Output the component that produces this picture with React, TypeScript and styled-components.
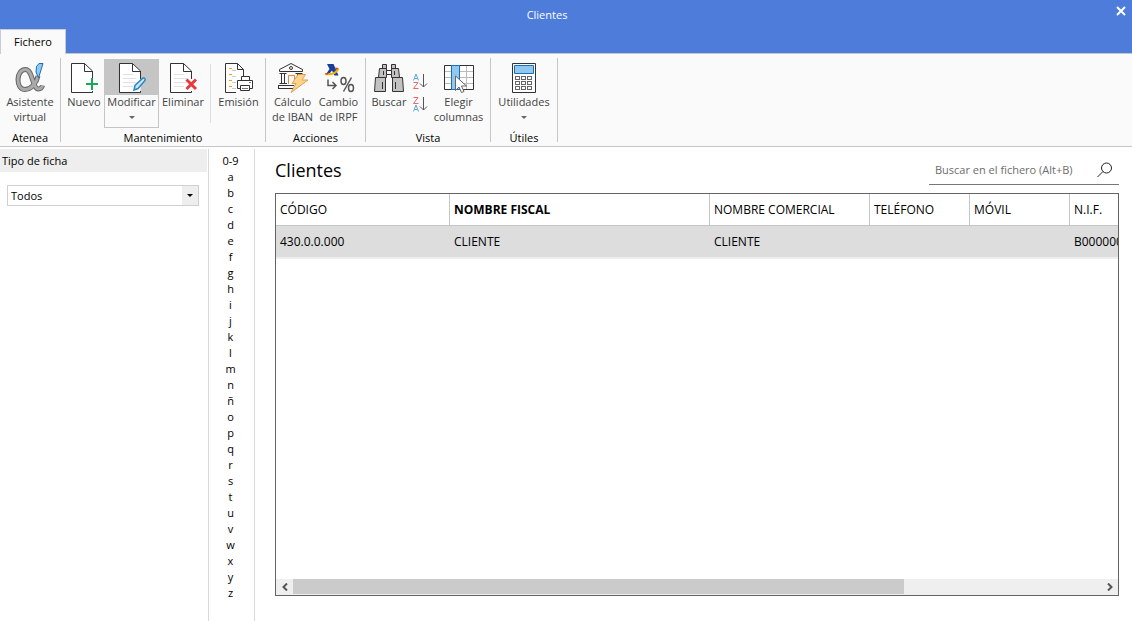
import React from 'react';
import styled, { createGlobalStyle, css } from 'styled-components';

const GlobalStyle = createGlobalStyle`
  * { box-sizing: border-box; }
  body {
    margin: 0;
    background: #fff;
    color: #000;
    font-family: 'Open Sans', 'Noto Sans', sans-serif;
    font-size: 11px;
    line-height: 15px;
  }
  button, input, select { font: inherit; color: inherit; }
  button { background: none; border: 0; padding: 0; margin: 0; }
  svg { display: block; }
`;

const Window = styled.div`
  min-height: 100vh;
  display: flex;
  flex-direction: column;
`;

const Header = styled.header`
  background: #4d7cdb;
`;

const TitleBar = styled.div`
  display: flex;
  align-items: flex-start;
  height: 29px;
`;

const WindowTitle = styled.div`
  flex: 1;
  padding-top: 7px;
  text-align: center;
  color: #fff;
`;

const CloseButton = styled.button`
  width: 38px;
  height: 24px;
  padding: 6px 6px 0 0;
  display: flex;
  justify-content: flex-end;
`;

const Tab = styled.button`
  width: 66px;
  height: 25px;
  margin-bottom: -1px;
  padding-bottom: 2px;
  position: relative;
  display: block;
  background: #fafafa;
  border: 1px solid #c6ccd8;
  border-bottom: 0;
`;

const Ribbon = styled.div`
  display: flex;
  height: 94px;
  padding-top: 4px;
  background: #fafafa;
  border-top: 1px solid #c6c6c6;
  border-bottom: 1px solid #c6c6c6;
`;

const Group = styled.section<{ $width: number }>`
  width: ${(p) => p.$width}px;
  height: 84px;
  display: flex;
  flex-direction: column;
  border-right: 1px solid #c6c6c6;
`;

const GroupTools = styled.div`
  flex: 1;
  display: flex;
  justify-content: center;
  padding-top: 1px;
`;

const GroupLabel = styled.div`
  margin-bottom: -3px;
  text-align: center;
`;

const ToolButton = styled.button<{ $width: number; $active?: boolean }>`
  width: ${(p) => p.$width}px;
  height: 69px;
  display: flex;
  flex-direction: column;
  align-items: center;
  color: #444;
  white-space: nowrap;
  ${(p) => p.$active && css`box-shadow: inset 0 0 0 1px #c5c5c5;`}
`;

const ToolIcon = styled.span<{ $active?: boolean }>`
  width: 100%;
  height: 36px;
  flex: none;
  margin-bottom: -1px;
  padding-top: 3px;
  display: flex;
  justify-content: center;
  background: ${(p) => (p.$active ? '#c5c5c5' : 'transparent')};
`;

const Caret = styled.span`
  margin-top: 7px;
  border: 3px solid transparent;
  border-top-color: #666;
  border-bottom: 0;
`;

const Divider = styled.span`
  width: 1px;
  height: 59px;
  margin: 5px 4px 0 3px;
  background: #dcdcdc;
`;

const SortButtons = styled.div`
  display: flex;
  flex-direction: column;
  gap: 5px;
  margin-left: 1px;
  padding-top: 14px;
`;

const Body = styled.div`
  flex: 1;
  display: flex;
  padding-top: 2px;
`;

const Sidebar = styled.aside`
  width: 209px;
  padding-right: 1px;
  border-right: 1px solid #d9d9d9;
`;

const SidebarTitle = styled.label`
  display: block;
  height: 23px;
  padding: 4px 2px;
  background: #eee;
`;

const SelectBox = styled.div`
  margin: 13px 8px 0 7px;
  position: relative;
`;

const Select = styled.select`
  width: 100%;
  height: 21px;
  padding: 0 3px;
  appearance: none;
  border: 1px solid #d0d0d0;
  border-radius: 0;
  background: #fff;
`;

const SelectArrow = styled.span`
  position: absolute;
  top: 1px;
  right: 1px;
  width: 16px;
  height: 19px;
  display: flex;
  align-items: center;
  justify-content: center;
  background: #eee;
  pointer-events: none;

  &::after {
    content: '';
    border: 3px solid transparent;
    border-top-color: #000;
    border-bottom: 0;
  }
`;

const LetterIndex = styled.nav`
  width: 46px;
  padding: 4px 2px 0 0;
  display: flex;
  flex-direction: column;
  border-right: 1px solid #d9d9d9;
`;

const Letter = styled.a`
  height: 16px;
  line-height: 16px;
  text-align: center;
  color: #000;
  text-decoration: none;
`;

const Main = styled.main`
  flex: 1;
  min-width: 0;
  padding: 6px 13px 25px 20px;
  display: flex;
  flex-direction: column;
`;

const MainHeader = styled.div`
  display: flex;
  justify-content: space-between;
  height: 38px;
`;

const Heading = styled.h1`
  margin: 0;
  font-size: 18px;
  line-height: 30px;
  font-weight: 400;
`;

const Search = styled.div`
  width: 190px;
  height: 30px;
  padding: 0 6px;
  display: flex;
  align-items: center;
  border-bottom: 1px solid #777;
`;

const SearchInput = styled.input`
  flex: 1;
  min-width: 0;
  padding: 0;
  border: 0;
  outline: 0;
  background: none;
  &::placeholder { color: #6d6d6d; opacity: 1; }
`;

const Grid = styled.div`
  flex: 1;
  display: flex;
  flex-direction: column;
  border: 1px solid #646464;
`;

const GridViewport = styled.div`
  flex: 1;
  overflow: hidden;
`;

const Table = styled.table`
  width: 1120px;
  table-layout: fixed;
  border-collapse: separate;
  border-spacing: 0;
  font-size: 12px;
  line-height: 16px;
`;

const Th = styled.th<{ $width?: number; $sorted?: boolean }>`
  width: ${(p) => (p.$width ? `${p.$width}px` : 'auto')};
  height: 32px;
  padding: 0 4px;
  text-align: left;
  white-space: nowrap;
  font-weight: ${(p) => (p.$sorted ? 700 : 400)};
  border-right: 1px solid #c6c6c6;
  border-bottom: 1px solid #c6c6c6;
`;

const Td = styled.td`
  height: 33px;
  padding: 0 4px;
  background: #ddd;
  border-bottom: 2px solid #eee;
`;

const ScrollBar = styled.div`
  height: 16px;
  display: flex;
  background: #efefef;
`;

const ScrollButton = styled.button`
  width: 17px;
  height: 16px;
  display: flex;
  align-items: center;
  justify-content: center;
`;

const ScrollTrack = styled.div`
  flex: 1;
`;

const ScrollThumb = styled.div`
  width: 75.6%;
  height: 15px;
  background: #cbcbcb;
`;

const Page = ({ lines }: { lines?: boolean }) => (
  <>
    <path d="M1.5 1.5H15L22.5 9V30.5H1.5Z" fill="#fff" />
    {lines && <path d="M5 12.5H15M5 16.5H18M5 20.5H18M5 24.5H15" stroke="#e0e0e0" fill="none" />}
    <path d="M22.5 17V9L14.5 1.5H1.5V30.5H22.5V29M14.5 1.5V9.5H22.5" fill="none" stroke="#333" />
  </>
);

const alphaStroke =
  'M23 14C21.5 21 16 27.5 10 27.5C5.500 27.5 3 23 3 17.5C3 12 6 7.500 10.500 7.500C18 7.500 17 27 23.500 27C26 27 27 25.500 27.500 23.500';

const AlphaIcon = () => (
  <svg width="30" height="32" viewBox="0 0 30 32">
    <path d={alphaStroke} fill="none" stroke="#666" strokeWidth="5" />
    <path d={alphaStroke} fill="none" stroke="#aaa" strokeWidth="3" />
    <path d="M21.5 4.500L24 1.500H28L23.500 16L21 10Z" fill="#90c8f0" stroke="#1a6fb5" />
  </svg>
);

const NewIcon = () => (
  <svg width="28" height="32" viewBox="0 0 28 32">
    <Page />
    <path d="M16 22H28M22 16V28" stroke="#18a957" strokeWidth="2" />
  </svg>
);

const EditIcon = () => (
  <svg width="28" height="32" viewBox="0 0 28 32">
    <Page lines />
    <path d="M16 28L17 23.5L25 16Q27.5 15.5 27 18.5L20 26.5Z" fill="#cfe6f7" stroke="#2a86c8" strokeWidth="1.5" />
  </svg>
);

const DeleteIcon = () => (
  <svg width="28" height="32" viewBox="0 0 28 32">
    <Page lines />
    <path d="M17.5 17.5L27 27M27 17.5L17.5 27" stroke="#e8393c" strokeWidth="3" />
  </svg>
);

const PrintIcon = () => (
  <svg width="29" height="32" viewBox="0 0 29 32">
    <path d="M12 30.5H1.5V1.5H13.5L19.5 7.5V14M13.5 1.5V7.5H19.5" fill="#fff" stroke="#333" />
    <path d="M5 6.5H8M5 12.5H8M5 18.5H8M5 24.5H8" stroke="#f0a020" />
    <path d="M8 8.5H12M8 14.5H12M8 20.5H12M8 26.5H12" stroke="#ccc" />
    <path d="M17.5 18V14.5H25.5V18M13.5 18.5H28.5V26.5H13.5Z" fill="#fff" stroke="#333" />
    <path d="M16.5 23.5H25.5V28.5H16.5Z" fill="#fff" stroke="#333" />
    <path d="M18 26.5H24M25 20.5H27" stroke="#777" />
  </svg>
);

const BankIcon = () => (
  <svg width="32" height="32" viewBox="0 0 32 32">
    <path d="M2.5 9.5V7.5L14 1.5L25.5 7.5V9.5ZM2.5 11.5H9.5M18.5 11.5H25.5M4.5 12V21M7.5 12V21M20.5 12V15M23.5 12V14M2.5 21.5H10M1.5 23.5H17M1.5 26.5H16M1.5 23V27" fill="none" stroke="#333" />
    <circle cx="14" cy="6" r="1.5" fill="none" stroke="#333" />
    <path d="M11.5 22V13.5H17.5V18" fill="none" stroke="#e08a3c" />
    <path d="M21 12.500H28.500L25 18H31L14 30.500L19 21.500H15Z" fill="#fbd58b" stroke="#e3a04c" />
  </svg>
);

const TaxIcon = () => (
  <svg width="32" height="32" viewBox="0 0 32 32">
    <path d="M4 2H10.5L15.500 13.500H11.500L9 8.500L5.500 13H2.500L6.500 7Z" fill="#173f9c" />
    <path d="M2 12Q12 13.500 15.500 6.500" fill="none" stroke="#f4b400" strokeWidth="2" />
    <path d="M2 11.500L6 10.500L4 13ZM12 5.500L15.500 6L13.500 8Z" fill="#d9342b" />
    <path d="M5 17.500V23.500H12.500M9.500 20L13 23.500L9.500 27" fill="none" stroke="#555" strokeWidth="1.5" />
    <path d="M28.500 15.500L20.500 29.500" stroke="#555" strokeWidth="1.5" />
    <ellipse cx="20.5" cy="19" rx="2.5" ry="3.5" fill="none" stroke="#555" strokeWidth="1.5" />
    <ellipse cx="28" cy="26" rx="2.5" ry="3.5" fill="none" stroke="#555" strokeWidth="1.5" />
  </svg>
);

const BinocularsIcon = () => (
  <svg width="32" height="32" viewBox="0 0 32 32" fill="#c4c2c0" stroke="#333">
    <path d="M9.5 2.5H13.5V6.5H9.5ZM18.5 2.5H22.5V6.5H18.5ZM6.5 6.5H13.5V15.5H5.5ZM18.5 6.5H25.5L26.5 15.5H18.5ZM2.5 15.5H12.5V29.5H1.5ZM19.5 15.5H29.5L30.5 29.5H19.5Z" />
    <path d="M13.5 8.5H18.5V12.5H13.5Z" fill="#fff" />
    <path d="M9.500 20V27M22.500 20V27M10.500 9V13M21.500 9V13" />
  </svg>
);

const SortIcon = ({ descending }: { descending?: boolean }) => (
  <svg width="16" height="18" viewBox="0 0 16 18" fill="none">
    <path d="M1.5 7.5L4 1L6.5 7.5M2.5 5.5H5.5" stroke="#5ba7dc" transform={descending ? 'translate(0 8)' : undefined} />
    <path d="M1.5 9.5H6L1.5 15.5H6.5" stroke="#e8696c" transform={descending ? 'translate(0 -8)' : undefined} />
    <path d="M11.5 1V14M8 10.5L11.5 14L15 10.5" stroke="#555" />
  </svg>
);

const ColumnsIcon = () => (
  <svg width="32" height="32" viewBox="0 0 32 32">
    <path d="M1.5 3.5H30.500V27.500H1.5Z" fill="#fff" stroke="#333" />
    <path d="M2 9.500H30M2 15.500H30M2 21.500H30M23.500 4V27" stroke="#bbb" />
    <path d="M8.500 3.500H16.500V27.500H8.500Z" fill="#90c8f0" stroke="#1a6fb5" />
    <path d="M12.500 14V28.500L16 25L18.500 30.500L21 29.500L18.500 24H23.500Z" fill="#fff" stroke="#666" />
  </svg>
);

const CalculatorIcon = () => (
  <svg width="24" height="32" viewBox="0 0 24 32">
    <path d="M.5 1.5H23.5V30.5H.5Z" fill="#fff" stroke="#333" />
    <path d="M2.5 3.5H21.5V11.5H2.5Z" fill="#90c8f0" stroke="#1a6fb5" />
    <g fill="none" stroke="#666">
      {[14.5, 19.5, 24.5].map((y) =>
        [3.5, 9.5, 15.5].map((x) => <rect key={`${x}-${y}`} x={x} y={y} width="4" height="3" />),
      )}
    </g>
  </svg>
);

const columns = [
  { name: 'CÓDIGO', width: 174 },
  { name: 'NOMBRE FISCAL', width: 260, sorted: true },
  { name: 'NOMBRE COMERCIAL', width: 160 },
  { name: 'TELÉFONO', width: 100 },
  { name: 'MÓVIL', width: 100 },
  { name: 'N.I.F.' },
];

const clients = [['430.0.0.000', 'CLIENTE', 'CLIENTE', '', '', 'B00000000']];

const letters = ['0-9', ...'abcdefghijklmnñopqrstuvwxyz'];

type ToolProps = {
  width: number;
  icon: React.ReactNode;
  lines: string[];
  active?: boolean;
  menu?: boolean;
};

const Tool = ({ width, icon, lines, active, menu }: ToolProps) => (
  <ToolButton type="button" $width={width} $active={active}>
    <ToolIcon $active={active}>{icon}</ToolIcon>
    {lines.map((line) => (
      <span key={line}>{line}</span>
    ))}
    {menu && <Caret />}
  </ToolButton>
);

export default function App() {
  return (
    <Window>
      <GlobalStyle />
      <Header>
        <TitleBar>
          <WindowTitle>Clientes</WindowTitle>
          <CloseButton type="button" aria-label="Cerrar">
            <svg width="10" height="10" viewBox="0 0 10 10">
              <path d="M1 1L9 9M9 1L1 9" stroke="#fff" strokeWidth="2" />
            </svg>
          </CloseButton>
        </TitleBar>
        <Tab type="button">Fichero</Tab>
      </Header>

      <Ribbon>
        <Group $width={61}>
          <GroupTools>
            <Tool width={58} icon={<AlphaIcon />} lines={['Asistente', 'virtual']} />
          </GroupTools>
          <GroupLabel>Atenea</GroupLabel>
        </Group>
        <Group $width={205}>
          <GroupTools>
            <Tool width={40} icon={<NewIcon />} lines={['Nuevo']} />
            <Tool width={55} icon={<EditIcon />} lines={['Modificar']} active menu />
            <Tool width={48} icon={<DeleteIcon />} lines={['Eliminar']} />
            <Divider />
            <Tool width={47} icon={<PrintIcon />} lines={['Emisión']} />
          </GroupTools>
          <GroupLabel>Mantenimiento</GroupLabel>
        </Group>
        <Group $width={100}>
          <GroupTools>
            <Tool width={46} icon={<BankIcon />} lines={['Cálculo', 'de IBAN']} />
            <Tool width={46} icon={<TaxIcon />} lines={['Cambio', 'de IRPF']} />
          </GroupTools>
          <GroupLabel>Acciones</GroupLabel>
        </Group>
        <Group $width={125}>
          <GroupTools>
            <Tool width={44} icon={<BinocularsIcon />} lines={['Buscar']} />
            <SortButtons>
              <button type="button" aria-label="Orden ascendente"><SortIcon /></button>
              <button type="button" aria-label="Orden descendente"><SortIcon descending /></button>
            </SortButtons>
            <Tool width={61} icon={<ColumnsIcon />} lines={['Elegir', 'columnas']} />
          </GroupTools>
          <GroupLabel>Vista</GroupLabel>
        </Group>
        <Group $width={67}>
          <GroupTools>
            <Tool width={58} icon={<CalculatorIcon />} lines={['Utilidades']} menu />
          </GroupTools>
          <GroupLabel>Útiles</GroupLabel>
        </Group>
      </Ribbon>

      <Body>
        <Sidebar>
          <SidebarTitle htmlFor="tipo">Tipo de ficha</SidebarTitle>
          <SelectBox>
            <Select id="tipo" defaultValue="Todos">
              <option>Todos</option>
            </Select>
            <SelectArrow />
          </SelectBox>
        </Sidebar>

        <LetterIndex>
          {letters.map((letter) => (
            <Letter key={letter} href={`#${letter}`}>{letter}</Letter>
          ))}
        </LetterIndex>

        <Main>
          <MainHeader>
            <Heading>Clientes</Heading>
            <Search>
              <SearchInput placeholder="Buscar en el fichero (Alt+B)" aria-label="Buscar en el fichero" />
              <svg width="16" height="16" viewBox="0 0 16 16" fill="none" stroke="#222">
                <circle cx="9.5" cy="6" r="5" />
                <path d="M6 9.5L.5 15" />
              </svg>
            </Search>
          </MainHeader>
          <Grid>
            <GridViewport>
              <Table>
                <thead>
                  <tr>
                    {columns.map((c) => (
                      <Th key={c.name} $width={c.width} $sorted={c.sorted}>{c.name}</Th>
                    ))}
                  </tr>
                </thead>
                <tbody>
                  {clients.map((row) => (
                    <tr key={row[0]}>
                      {row.map((value, i) => (
                        <Td key={columns[i].name}>{value}</Td>
                      ))}
                    </tr>
                  ))}
                </tbody>
              </Table>
            </GridViewport>
            <ScrollBar>
              <ScrollButton type="button" aria-label="Desplazar a la izquierda">
                <svg width="6" height="8" viewBox="0 0 6 8"><path d="M5 .5L1.5 4L5 7.5" fill="none" stroke="#555" strokeWidth="2" /></svg>
              </ScrollButton>
              <ScrollTrack><ScrollThumb /></ScrollTrack>
              <ScrollButton type="button" aria-label="Desplazar a la derecha">
                <svg width="6" height="8" viewBox="0 0 6 8"><path d="M1 .5L4.5 4L1 7.5" fill="none" stroke="#555" strokeWidth="2" /></svg>
              </ScrollButton>
            </ScrollBar>
          </Grid>
        </Main>
      </Body>
    </Window>
  );
}
